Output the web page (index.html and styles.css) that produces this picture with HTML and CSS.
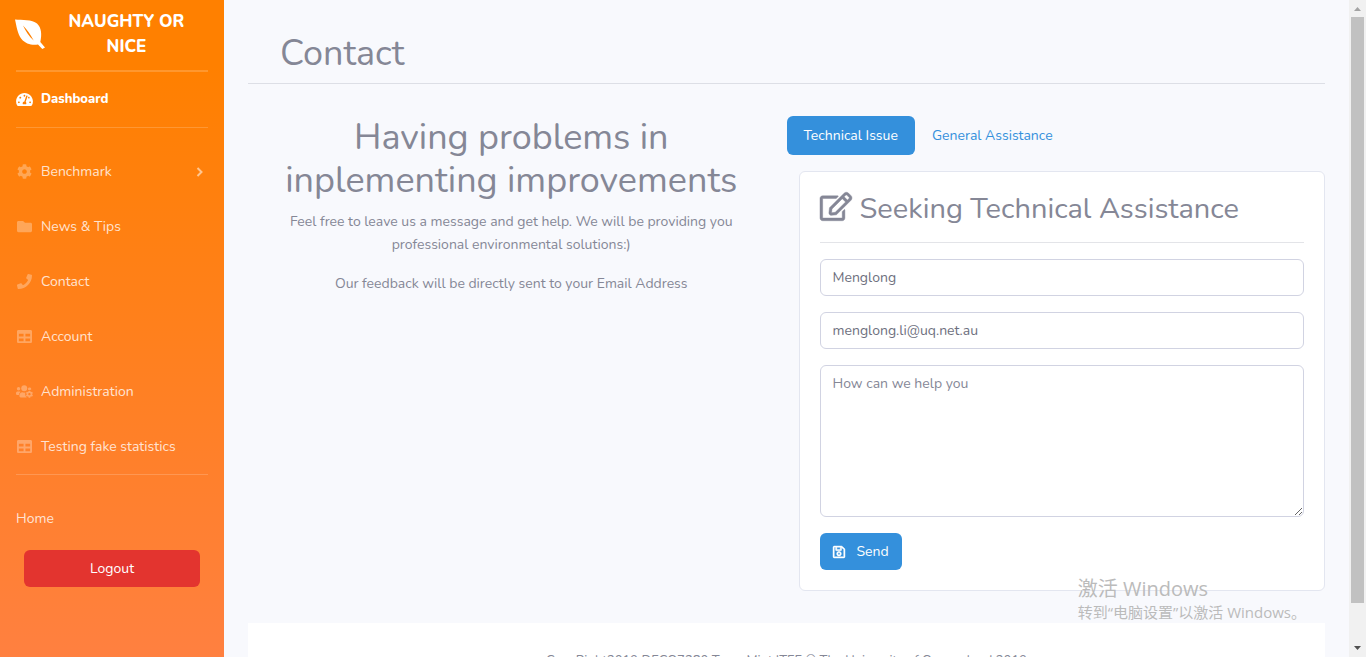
FILE: index.html
```html
<!DOCTYPE html>
<html lang="en">
<head>
<meta charset="utf-8">
<title>Contact</title>
<link rel="stylesheet" href="styles.css">
</head>
<body>
<svg class="sprite" aria-hidden="true">
  <symbol id="table" viewBox="0 0 512 512"><path d="M464 32H48C21.49 32 0 53.49 0 80v352c0 26.51 21.49 48 48 48h416c26.51 0 48-21.49 48-48V80c0-26.51-21.49-48-48-48zM224 416H64v-96h160v96zm0-160H64v-96h160v96zm224 160H288v-96h160v96zm0-160H288v-96h160v96z"/></symbol>
  <symbol id="cog" viewBox="0 0 512 512"><path d="M487.4 315.7l-42.6-24.6c4.3-23.2 4.3-47 0-70.2l42.6-24.6c4.9-2.8 7.1-8.6 5.5-14-11.1-35.6-30-67.8-54.7-94.6-3.8-4.1-10-5.1-14.8-2.3L380.8 110c-17.9-15.4-38.5-27.3-60.8-35.1V25.8c0-5.6-3.9-10.5-9.4-11.7-36.7-8.2-74.3-7.8-109.2 0-5.5 1.2-9.4 6.1-9.4 11.7V75c-22.2 7.9-42.8 19.8-60.8 35.1L88.7 85.5c-4.9-2.8-11-1.9-14.8 2.3-24.7 26.7-43.6 58.9-54.7 94.6-1.7 5.4.6 11.2 5.5 14L67.3 221c-4.3 23.2-4.3 47 0 70.2l-42.6 24.6c-4.9 2.8-7.1 8.6-5.5 14 11.1 35.6 30 67.8 54.7 94.6 3.8 4.1 10 5.1 14.8 2.3l42.6-24.6c17.9 15.4 38.5 27.3 60.8 35.1v49.2c0 5.6 3.9 10.5 9.4 11.7 36.7 8.2 74.3 7.8 109.2 0 5.5-1.2 9.4-6.1 9.4-11.7v-49.2c22.2-7.9 42.8-19.8 60.8-35.1l42.6 24.6c4.9 2.8 11 1.9 14.8-2.3 24.7-26.7 43.6-58.9 54.7-94.6 1.5-5.5-.7-11.3-5.6-14.1zM256 336c-44.1 0-80-35.9-80-80s35.9-80 80-80 80 35.9 80 80-35.9 80-80 80z"/></symbol>
</svg>
<div class="page">
  <nav class="sidebar" aria-label="Main">
    <a class="brand" href="#">
      <svg class="brand-icon" viewBox="0 0 30 31"><path fill-rule="evenodd" d="M0 .5C7 1 17 .5 22 4.500c4.500 4 5 11 3.300 18.500l4.700 5.500-2.700 1.500-4.300-4.500C17 26.500 10.500 25 6.500 20 2.500 15 1.500 7 0 .5zM8 6.500c2.500 5.500 6 11 10.700 15C15.500 15.500 12 10.500 8 6.500z"/></svg>
      <span class="brand-name">Naughty or Nice</span>
    </a>
    <hr class="divider divider-thick">
    <a class="nav-item nav-active" href="#"><svg class="nav-icon" viewBox="0 0 576 512"><path d="M288 32C128.940 32 0 160.940 0 320c0 52.800 14.250 102.260 39.060 144.800 5.610 9.620 16.300 15.200 27.440 15.200h443c11.140 0 21.830-5.580 27.440-15.200C561.750 422.260 576 372.800 576 320c0-159.060-128.940-288-288-288zm0 64c14.710 0 26.580 10.130 30.320 23.650-1.110 2.260-2.640 4.230-3.450 6.670l-9.220 27.670c-5.130 3.490-10.970 6.010-17.640 6.010-17.670 0-32-14.330-32-32S270.330 96 288 96zM96 384c-17.670 0-32-14.330-32-32s14.330-32 32-32 32 14.330 32 32-14.330 32-32 32zm48-160c-17.670 0-32-14.330-32-32s14.330-32 32-32 32 14.330 32 32-14.330 32-32 32zm246.770-72.410l-61.330 184C343.130 347.330 352 364.540 352 384c0 11.720-3.380 22.550-8.880 32H232.880c-5.500-9.450-8.880-20.280-8.880-32 0-33.940 26.500-61.430 59.900-63.590l61.340-184.010c4.170-12.560 17.730-19.450 30.360-15.170 12.570 4.190 19.350 17.790 15.170 30.360zm14.660 57.200l15.520-46.550c3.470-1.290 7.130-2.230 11.050-2.230 17.670 0 32 14.330 32 32s-14.330 32-32 32c-11.380-.01-21.290-6.010-26.570-15.220zM480 384c-17.670 0-32-14.330-32-32s14.330-32 32-32 32 14.330 32 32-14.330 32-32 32z"/></svg><span>Dashboard</span></a>
    <hr class="divider">
    <div class="nav-group">
      <a class="nav-item" href="#"><svg class="nav-icon"><use href="#cog"/></svg><span>Benchmark</span><svg class="chevron" viewBox="0 0 8 10"><path d="M1.500 1l4 4-4 4"/></svg></a>
      <a class="nav-item" href="#"><svg class="nav-icon" viewBox="0 0 512 512"><path d="M464 128H272l-64-64H48C21.490 64 0 85.490 0 112v288c0 26.510 21.490 48 48 48h416c26.510 0 48-21.490 48-48V176c0-26.510-21.490-48-48-48z"/></svg><span>News &amp; Tips</span></a>
      <a class="nav-item" href="#"><svg class="nav-icon" viewBox="0 0 512 512"><path d="M493.400 24.600l-104-24c-11.300-2.600-22.900 3.300-27.500 13.900l-48 112c-4.200 9.800-1.400 21.300 6.900 28l60.600 49.600c-36 76.700-98.900 140.500-177.200 177.200l-49.600-60.600c-6.800-8.300-18.200-11.100-28-6.900l-112 48C3.900 366.500-2 378.100.6 389.400l24 104C27.100 504.200 36.700 512 48 512c256.100 0 464-207.500 464-464 0-11.200-7.700-20.900-18.600-23.400z"/></svg><span>Contact</span></a>
      <a class="nav-item" href="#"><svg class="nav-icon"><use href="#table"/></svg><span>Account</span></a>
      <a class="nav-item" href="#"><svg class="nav-icon" viewBox="0 0 640 512"><circle cx="96" cy="150" r="64"/><circle cx="310" cy="134" r="112"/><path d="M450 160a62 62 0 1 1 124 20l-60 30-60-20zM0 320c0-38 26-64 64-64h64c18 0 32 6 44 16-38 24-58 58-64 112H32c-18 0-32-14-32-32zM128 418c0-74 46-130 115-130 34 16 76 18 112 8-20 60-10 130 50 184H176c-28 0-48-20-48-62z"/><svg x="366" y="216" width="280" height="280"><use href="#cog"/></svg></svg><span>Administration</span></a>
      <a class="nav-item" href="#"><svg class="nav-icon"><use href="#table"/></svg><span>Testing fake statistics</span></a>
    </div>
    <hr class="divider">
    <a class="home" href="#">Home</a>
    <button class="logout" type="button">Logout</button>
  </nav>

  <div class="content">
    <main>
      <header class="page-head"><h1>Contact</h1></header>
      <div class="columns">
        <section class="intro">
          <h1>Having problems in inplementing improvements</h1>
          <p>Feel free to leave us a message and get help. We will be providing you professional environmental solutions:)</p>
          <p>Our feedback will be directly sent to your Email Address</p>
        </section>
        <section class="help">
          <div class="pills">
            <a class="pill pill-active" href="#">Technical Issue</a>
            <a class="pill" href="#">General Assistance</a>
          </div>
          <form class="card">
            <h2><svg class="edit-icon" viewBox="0 0 576 512"><path d="M402.300 344.900l32-32c5-5 13.700-1.500 13.700 5.700V464c0 26.500-21.500 48-48 48H48c-26.500 0-48-21.500-48-48V112c0-26.500 21.500-48 48-48h273.500c7.100 0 10.700 8.600 5.700 13.700l-32 32c-1.500 1.500-3.500 2.300-5.700 2.300H48v352h352V350.500c0-2.100.8-4.100 2.300-5.600zm156.600-201.800L296.300 405.700l-90.400 10c-26.200 2.900-48.500-19.200-45.600-45.600l10-90.400L432.900 17.100c22.900-22.900 59.900-22.900 82.700 0l43.200 43.200c22.900 22.900 22.900 60 .1 82.800zM460.100 174L402 115.900 216.200 301.800l-7.300 65.300 65.300-7.300L460.100 174zm64.800-79.700l-43.200-43.200c-4.100-4.100-10.800-4.100-14.800 0L436 82l58.100 58.100 30.900-30.900c4-4.200 4-10.800-.1-14.900z"/></svg>Seeking Technical Assistance</h2>
            <hr class="card-rule">
            <input class="field" type="text" aria-label="Name" value="Menglong">
            <input class="field" type="email" aria-label="Email" value="menglong.li@uq.net.au">
            <textarea class="field message" aria-label="Message" placeholder="How can we help you"></textarea>
            <button class="send" type="submit"><svg class="save-icon" viewBox="0 0 448 512"><path d="M433.941 129.941l-83.882-83.882A48 48 0 0 0 316.118 32H48C21.490 32 0 53.490 0 80v352c0 26.510 21.490 48 48 48h352c26.510 0 48-21.490 48-48V163.882a48 48 0 0 0-14.059-33.941zM272 80v80H144V80h128zm122 352H54a6 6 0 0 1-6-6V86a6 6 0 0 1 6-6h42v104c0 13.255 10.745 24 24 24h176c13.255 0 24-10.745 24-24V83.882l78.243 78.243a6 6 0 0 1 1.757 4.243V426a6 6 0 0 1-6 6zM224 232c-48.523 0-88 39.477-88 88s39.477 88 88 88 88-39.477 88-88-39.477-88-88-88zm0 128c-22.056 0-40-17.944-40-40s17.944-40 40-40 40 17.944 40 40-17.944 40-40 40z"/></svg>Send</button>
          </form>
        </section>
      </div>
    </main>
    <footer>CopyRight2019 DECO7380 Team:Mint ITEE © The University of Queensland 2019</footer>
  </div>

  <div class="scrollbar" aria-hidden="true">
    <svg class="arrow" viewBox="0 0 17 17"><path fill="#a3a3a3" d="M5 11h7L8.500 7z"/></svg>
    <div class="track"><div class="thumb"></div></div>
    <svg class="arrow" viewBox="0 0 17 17"><path fill="#505050" d="M5 6h7l-3.500 4z"/></svg>
  </div>
</div>
<div class="watermark" lang="zh-CN">
  <p class="watermark-title">激活 Windows</p>
  <p>转到“电脑设置”以激活 Windows。</p>
</div>
</body>
</html>
```

FILE: styles.css
```css
* { box-sizing: border-box; }

body {
  margin: 0;
  overflow: hidden;
  background: #f8f9fd;
  color: #858796;
  font: 14px/23px Nunito, "Open Sans", sans-serif;
}

h1, h2, p { margin: 0; font-weight: 400; }
h1 { font-size: 36px; line-height: 43px; }
h2 { font-size: 29px; line-height: 34px; }
a { text-decoration: none; }
button, input, textarea { font: inherit; }
svg { fill: currentColor; flex: none; }
.sprite { position: absolute; width: 0; height: 0; }

.page { display: flex; height: 100vh; }

/* Sidebar */
.sidebar {
  display: flex;
  flex-direction: column;
  flex: none;
  width: 224px;
  color: #fff;
  background: linear-gradient(180deg, #ff8000 10%, #ff8040 100%);
}
.brand {
  display: flex;
  align-items: center;
  gap: 8px;
  height: 70px;
  padding: 0 24px 2px 15px;
  color: #fff;
  font-size: 17px;
  font-weight: 800;
  line-height: 25px;
  text-align: center;
  text-transform: uppercase;
}
.brand-icon { width: 30px; height: 31px; }
.brand-name { flex: 1; padding: 0 14px; }
.divider {
  width: 192px;
  margin: 0 16px;
  border: 0;
  border-top: 1px solid rgba(255, 255, 255, .18);
}
.divider-thick { border-top-width: 2px; }
.nav-group { padding-top: 16px; }
.nav-item {
  display: flex;
  align-items: center;
  gap: 8px;
  height: 55px;
  padding: 0 16px;
  color: rgba(255, 255, 255, .8);
}
.nav-icon { width: 17px; height: 15px; color: rgba(255, 255, 255, .3); }
.nav-active, .nav-active .nav-icon { color: #fff; }
.nav-active { font-size: 13px; font-weight: 800; }
.chevron {
  width: 8px;
  height: 10px;
  margin-left: auto;
  margin-right: 4px;
  fill: none;
  stroke: rgba(255, 255, 255, .55);
  stroke-width: 2;
}
.home { padding: 32px 16px 20px; color: rgba(255, 255, 255, .8); }
.logout {
  height: 37px;
  margin: 0 24px;
  border: 0;
  border-radius: 6px;
  background: #e3342f;
  color: #fff;
}

/* Content */
.content { flex: 1; min-width: 0; padding: 0 24px; }
.page-head { padding: 32px 32px 8px; border-bottom: 1px solid #dddfe6; }
.columns {
  display: grid;
  grid-template-columns: 1fr 1fr;
  margin: 32px -12px;
}
.intro { padding: 0 12px; text-align: center; }
.intro h1 { margin-bottom: 8px; }
.intro p { padding: 0 32px; margin-bottom: 16px; }
.help { padding-right: 12px; }
.pills { display: flex; margin-bottom: 16px; }
.pill { padding: 8px 17px; border-radius: 6px; color: #3490dc; }
.pill-active { background: #3490dc; color: #fff; }

.card {
  margin-left: 12px;
  padding: 20px;
  border: 1px solid #e3e6f0;
  border-radius: 6px;
  background: #fff;
}
.edit-icon {
  width: 32px;
  height: 29px;
  margin-right: 8px;
  vertical-align: -3px;
  overflow: visible;
  stroke: currentColor;
  stroke-width: 8;
}
.card-rule { margin: 16px 0; border: 0; border-top: 1px solid #e3e4e8; }
.field {
  display: block;
  width: 100%;
  height: 37px;
  margin-bottom: 16px;
  padding: 6px 12px;
  border: 1px solid #d1d3e2;
  border-radius: 6px;
  background: #fff;
  color: #6e707e;
}
.message { height: 152px; resize: vertical; }
.message::placeholder { color: #858796; }
.send {
  display: flex;
  align-items: center;
  gap: 12px;
  height: 37px;
  padding: 0 13px;
  border: 0;
  border-radius: 6px;
  background: #3490dc;
  color: #fff;
}
.save-icon {
  width: 12px;
  height: 14px;
  overflow: visible;
  stroke: currentColor;
  stroke-width: 16;
}

footer {
  padding: 32px 0;
  background: #fff;
  font-size: 13px;
  line-height: 13px;
  text-align: center;
}

/* Scrollbar */
.scrollbar { display: flex; flex-direction: column; flex: none; width: 17px; background: #f1f1f1; }
.arrow { width: 17px; height: 17px; }
.track { flex: 1; padding: 0 2px; }
.thumb { height: 94%; background: #c1c1c1; }

.watermark {
  position: absolute;
  right: 60px;
  bottom: 34px;
  color: #bbb;
  font: 15px/22px "Open Sans", "Noto Sans CJK SC", sans-serif;
}
.watermark-title { font-size: 20px; line-height: 24px; }
```
